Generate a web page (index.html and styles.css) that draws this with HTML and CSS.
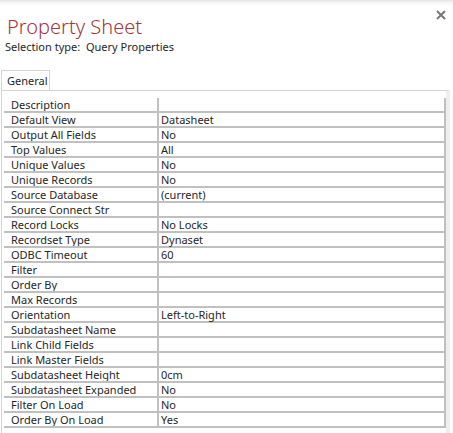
FILE: index.html
```html
<!DOCTYPE html>
<html>
<head>
<meta charset="utf-8">
<link rel="stylesheet" href="styles.css">
</head>
<body>
<div class="header">
  <div class="titles">
    <div class="title">Property Sheet</div>
    <div class="subtitle">Selection type:&nbsp; Query Properties</div>
  </div>
  <div class="close" aria-label="Close">
    <svg width="10" height="10" viewBox="0 0 10 10"><path d="M1 1 L9 9 M9 1 L1 9" stroke="#777" stroke-width="2" fill="none"/></svg>
  </div>
</div>
<div class="tabs">
  <div class="tab">General</div>
  <div class="tab-rest"></div>
</div>
<div class="panel">
  <div class="sheet">
    <div class="row"><div class="name">Description</div><div class="value"></div></div>
    <div class="row"><div class="name">Default View</div><div class="value">Datasheet</div></div>
    <div class="row"><div class="name">Output All Fields</div><div class="value">No</div></div>
    <div class="row"><div class="name">Top Values</div><div class="value">All</div></div>
    <div class="row"><div class="name">Unique Values</div><div class="value">No</div></div>
    <div class="row"><div class="name">Unique Records</div><div class="value">No</div></div>
    <div class="row"><div class="name">Source Database</div><div class="value">(current)</div></div>
    <div class="row"><div class="name">Source Connect Str</div><div class="value"></div></div>
    <div class="row"><div class="name">Record Locks</div><div class="value">No Locks</div></div>
    <div class="row"><div class="name">Recordset Type</div><div class="value">Dynaset</div></div>
    <div class="row"><div class="name">ODBC Timeout</div><div class="value">60</div></div>
    <div class="row"><div class="name">Filter</div><div class="value"></div></div>
    <div class="row"><div class="name">Order By</div><div class="value"></div></div>
    <div class="row"><div class="name">Max Records</div><div class="value"></div></div>
    <div class="row"><div class="name">Orientation</div><div class="value">Left-to-Right</div></div>
    <div class="row"><div class="name">Subdatasheet Name</div><div class="value"></div></div>
    <div class="row"><div class="name">Link Child Fields</div><div class="value"></div></div>
    <div class="row"><div class="name">Link Master Fields</div><div class="value"></div></div>
    <div class="row"><div class="name">Subdatasheet Height</div><div class="value">0cm</div></div>
    <div class="row"><div class="name">Subdatasheet Expanded</div><div class="value">No</div></div>
    <div class="row"><div class="name">Filter On Load</div><div class="value">No</div></div>
    <div class="row"><div class="name">Order By On Load</div><div class="value">Yes</div></div>
  </div>
</div>
</body>
</html>
```
FILE: styles.css
```css
html, body {
  margin: 0;
  padding: 0;
  background: #fff;
}
body {
  font-family: "Segoe UI", "Noto Sans", "Open Sans", sans-serif;
  color: #262626;
  height: 433px;
  display: flex;
  flex-direction: column;
  overflow: hidden;
}
.header {
  display: flex;
  justify-content: space-between;
  align-items: flex-start;
  height: 70px;
  box-sizing: border-box;
  padding: 9px 7px 0 5px;
  background: linear-gradient(#e6e6e6 0, #f6f6f6 3px, #fff 6px);
}
.titles {
  padding-top: 4px;
}
.title {
  font-size: 20px;
  line-height: 28px;
  color: #a4373a;
  padding-left: 2px;
  font-weight: 300;
}
.subtitle {
  font-size: 11px;
  line-height: 15px;
  margin-top: -2px;
}
.close {
  width: 10px;
  height: 10px;
  margin-top: 1px;
  display: flex;
}
.tabs {
  display: flex;
  padding-left: 1px;
  height: 20px;
  flex: none;
}
.tab {
  width: 49px;
  height: 20px;
  box-sizing: border-box;
  border: 1px solid #d4d4d4;
  border-bottom: none;
  font-size: 11px;
  line-height: 19px;
  padding-left: 5px;
}
.tab-rest {
  flex: 1;
}
.panel {
  flex: 1;
  min-height: 0;
  margin-left: 1px;
  margin-right: 3px;
  border-top: 1px solid #d4d4d4;
  border-left: 1px solid #d4d4d4;
  border-right: 4px solid #eeeeee;
  padding: 7px 0 0 2px;
  overflow: hidden;
}
.sheet {
  font-size: 11px;
}
.row {
  display: flex;
  height: 13px;
  line-height: 13px;
  border-bottom: 2px solid #c0c0c0;
  border-right: 2px solid #c0c0c0;
}
.name {
  width: 146px;
  padding-left: 7px;
  border-right: 2px solid #c0c0c0;
  white-space: nowrap;
  overflow: hidden;
}
.value {
  flex: 1;
  padding-left: 2px;
  white-space: nowrap;
}
```
